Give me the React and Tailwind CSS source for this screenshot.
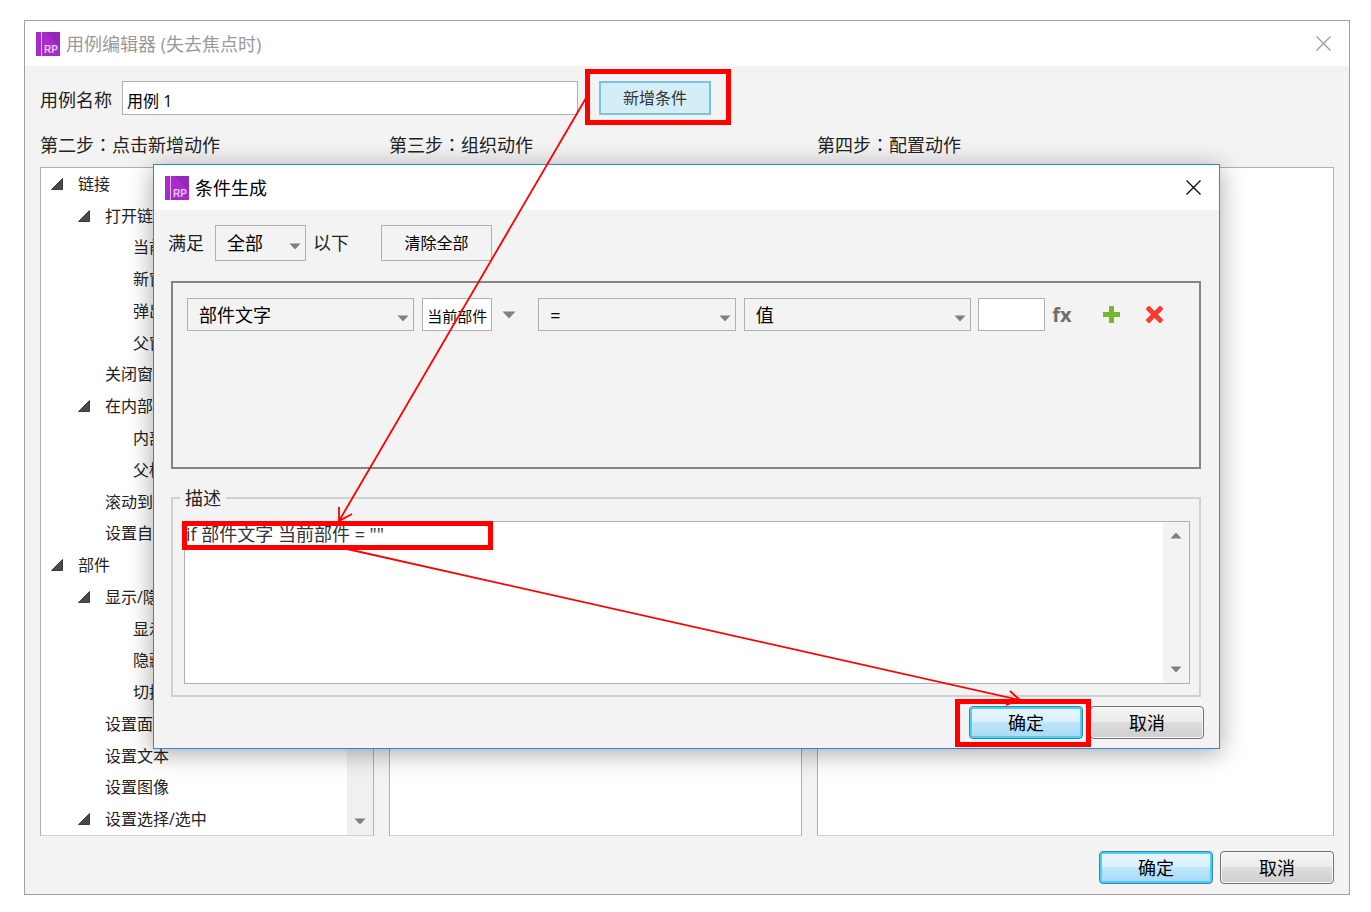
import React, { useState } from 'react';
import clsx from 'clsx';

const ACTIONS = [
  { label: '链接', level: 0, open: true },
  { label: '打开链接', level: 1, open: true },
  { label: '当前窗口', level: 2 },
  { label: '新窗口', level: 2 },
  { label: '弹出窗口', level: 2 },
  { label: '父窗口', level: 2 },
  { label: '关闭窗口', level: 1 },
  { label: '在内部框架中打开', level: 1, open: true },
  { label: '内部框架', level: 2 },
  { label: '父框架', level: 2 },
  { label: '滚动到部件', level: 1 },
  { label: '设置自适应视图', level: 1 },
  { label: '部件', level: 0, open: true },
  { label: '显示/隐藏', level: 1, open: true },
  { label: '显示', level: 2 },
  { label: '隐藏', level: 2 },
  { label: '切换可见性', level: 2 },
  { label: '设置面板状态', level: 1 },
  { label: '设置文本', level: 1 },
  { label: '设置图像', level: 1 },
  { label: '设置选择/选中', level: 1, open: true },
];

const INDENT = ['pl-2.5', 'pl-[37px]', 'pl-[65px]'];

const AppIcon = () => (
  <svg width="24" height="24" viewBox="0 0 24 24" aria-hidden="true" className="shrink-0">
    <rect width="24" height="24" fill="#a72bcb" />
    <path d="M10 0H24V16Z" fill="#9526b8" />
    <rect x="5" width="1" height="24" fill="#e3b4f0" />
    <text x="8" y="21" fontSize="10" fontWeight="bold" fontFamily="Liberation Sans, sans-serif" fill="#e9c6f3">RP</text>
  </svg>
);

const CloseButton = ({ className }) => (
  <button type="button" aria-label="关闭" className={className}>
    <svg width="15" height="15" viewBox="0 0 15 15" fill="none" stroke="currentColor" strokeWidth="1.2">
      <path d="M0.5 0.5L14.5 14.5M14.5 0.5L0.5 14.5" />
    </svg>
  </button>
);

const TitleBar = ({ title, inactive }) => (
  <header className="flex h-[45px] items-center gap-1.5 bg-white pl-[11px] pr-[18px]">
    <AppIcon />
    <h1 className={clsx('flex-1 text-[18px] leading-6', inactive ? 'text-[#999]' : 'text-black')}>{title}</h1>
    <CloseButton className={inactive ? 'text-[#999]' : 'text-black'} />
  </header>
);

const Arrow = ({ up, className }) => (
  <svg width="12" height="7" viewBox="0 0 12 7" aria-hidden="true" className={clsx('pointer-events-none', className)}>
    <path d={up ? 'M0.5 6.5L6 0.5L11.5 6.5Z' : 'M0.5 0.5L6 6.5L11.5 0.5Z'} fill="#808080" />
  </svg>
);

const Select = ({ label, options, className }) => (
  <div className={clsx('relative', className)}>
    <select
      aria-label={label}
      className="h-full w-full appearance-none border border-[#b0b0b0] bg-[#f3f3f3] pl-[11px] text-[18px] leading-6 text-black"
    >
      {options.map((o) => <option key={o}>{o}</option>)}
    </select>
    <Arrow className="absolute right-[5px] top-1/2" />
  </div>
);

// Vista style push buttons, the default one glows blue
const PushButton = ({ primary, children }) => (
  <button
    type="button"
    className={clsx(
      'h-[33px] w-[114px] rounded border text-[18px] leading-6 text-black',
      primary
        ? 'border-[#3c7fb1] bg-[linear-gradient(#eaf6fd,#d9f0fc_50%,#bee6fd_50%,#a7d9f5)] shadow-[inset_0_0_0_2px_#48d1f5]'
        : 'border-[#707070] bg-[linear-gradient(#f4f4f4,#ebebeb_50%,#dddddd_50%,#cfcfcf)] shadow-[inset_0_0_0_1px_#fafafa]'
    )}
  >
    {children}
  </button>
);

const Step = ({ step, name, children }) => (
  <section className="flex min-w-0 flex-col">
    <h2 className="h-9 text-[18px] leading-[27px] text-[#222]">
      {step}<span className="font-['Noto_Sans_CJK_TC',sans-serif]">{'\uFF1A'}</span>{name}
    </h2>
    <div className="flex flex-1 border border-[#b0b0b0] border-b-[#d0d0d0] bg-white">{children}</div>
  </section>
);

const ActionTree = () => (
  <>
    <ul className="flex flex-1 flex-col overflow-hidden">
      {ACTIONS.map(({ label, level, open }, i) => (
        <li key={i} className={clsx('flex flex-1 items-center gap-[15px] whitespace-nowrap text-[16px] leading-6 text-[#222]', INDENT[level])}>
          <svg width="12" height="12" viewBox="0 0 12 12" aria-hidden="true" className="shrink-0">
            {open && <path d="M11.5 0.5V11.5H0.5Z" fill="#4a4a4a" stroke="#222" strokeWidth="0.8" />}
          </svg>
          {label}
        </li>
      ))}
    </ul>
    <div className="flex w-[26px] flex-col items-center justify-end bg-[#f0f0f0] pb-2.5">
      <Arrow />
    </div>
  </>
);

const ConditionDialog = () => {
  const [text, setText] = useState('if 部件文字 当前部件 = ""');

  return (
    <div
      role="dialog"
      aria-label="条件生成"
      className="absolute left-[128px] right-[129px] top-[143px] border border-[#2f86d6] bg-[#f3f3f3] shadow-[0_4px_24px_rgba(0,0,0,0.35)]"
    >
      <TitleBar title="条件生成" />
      <div className="pb-[9px] pl-[17px] pr-[18px] pt-[15px]">
        <div className="-ml-[3px] flex h-9 items-center text-[18px] leading-6 text-[#222]">
          <span>满足</span>
          <Select label="满足" options={['全部', '任何']} className="ml-[11px] h-9 w-[91px]" />
          <span className="ml-[7px]">以下</span>
          <button type="button" className="ml-8 h-9 w-[111px] border border-[#b0b0b0] text-[16px] text-black">清除全部</button>
        </div>

        <div className="mt-5 h-[188px] border-2 border-[#858585] pl-3.5 pr-9 pt-[15px]">
          <div className="flex h-[33px] items-stretch">
            <Select label="条件类型" options={['部件文字']} className="flex-[228]" />
            <input
              aria-label="部件"
              defaultValue="当前部件"
              className="ml-2 w-[70px] border border-[#b0b0b0] bg-white pl-1 pt-1 text-[15px] text-black"
            />
            <button type="button" aria-label="选择部件" className="ml-2.5 mr-[22px]">
              <svg width="14" height="8" viewBox="0 0 14 8" aria-hidden="true">
                <path d="M0.5 0.5L7 7.5L13.5 0.5Z" fill="#808080" />
              </svg>
            </button>
            <Select label="比较" options={['=']} className="flex-[198]" />
            <Select label="值类型" options={['值']} className="ml-2 flex-[228]" />
            <input aria-label="值" className="ml-[7px] w-[67px] border border-[#b0b0b0] bg-white" />
            <button type="button" className="ml-1.5 w-[22px] font-['Open_Sans',sans-serif] text-[20px] font-bold leading-6 text-[#6e6e6e]">fx</button>
            <button type="button" aria-label="新增" className="ml-[30px]">
              <svg width="17" height="17" viewBox="0 0 17 17">
                <path d="M8.5 0V17M0 8.5H17" stroke="#77b82a" strokeWidth="5" />
              </svg>
            </button>
            <button type="button" aria-label="删除" className="ml-[26px]">
              <svg width="17" height="17" viewBox="0 0 17 17">
                <path d="M3 3L14 14M14 3L3 14" stroke="#fb3b30" strokeWidth="5" strokeLinecap="square" />
              </svg>
            </button>
          </div>
        </div>

        <fieldset className="mt-[17px] border-2 border-[#d0d0d0] pb-[11px] pl-[11px] pr-[9px] pt-[11px]">
          <legend className="-ml-1 px-[5px] text-[18px] leading-6 text-[#222]">描述</legend>
          <div className="relative flex h-[163px] border border-[#b0b0b0] bg-white">
            <textarea
              aria-label="描述"
              value={text}
              onChange={(e) => setText(e.target.value)}
              className="min-w-0 flex-1 resize-none overflow-hidden pl-px text-[18px] leading-6 text-[#333]"
            />
            <div className="flex w-[26px] flex-col items-center justify-between bg-[#f3f3f3] py-2.5">
              <Arrow up />
              <Arrow />
            </div>
            <div className="pointer-events-none absolute -left-[3px] -top-px h-[29px] w-[311px] border-[5px] border-[#f00]" />
          </div>
        </fieldset>

        <div className="-mr-[3px] mt-[9px] flex justify-end gap-[7px]">
          <div className="relative z-10 flex">
            <PushButton primary>确定</PushButton>
            <div className="pointer-events-none absolute -bottom-2 -left-3.5 -right-2 -top-[7px] border-[5px] border-[#f00]" />
          </div>
          <PushButton>取消</PushButton>
        </div>
      </div>
    </div>
  );
};

const App = () => (
  <div className="relative flex min-h-screen flex-col bg-white pb-[17px] pl-6 pr-[21px] pt-5 font-['Open_Sans','Noto_Sans_CJK_SC',sans-serif]">
    <main className="relative flex flex-1 flex-col border border-[#a0a0a0] bg-[#f3f3f3]">
      <TitleBar title="用例编辑器 (失去焦点时)" inactive />

      <div className="flex flex-1 flex-col px-[15px] pb-2.5 pt-[15px]">
        <div className="flex h-[34px] items-center">
          <label htmlFor="case-name" className="pt-1 text-[18px] leading-6 text-[#222]">用例名称</label>
          <input
            id="case-name"
            defaultValue="用例 1"
            className="ml-2.5 h-[34px] w-[456px] border border-[#b0b0b0] bg-white pl-1 pt-1 text-[16px] text-black"
          />
          <div className="relative z-10 ml-[21px] flex">
            <button type="button" className="h-[34px] w-[112px] border-2 border-[#74c4ea] bg-[#d4eef8] text-[16px] text-[#333]">新增条件</button>
            <div className="pointer-events-none absolute -bottom-2.5 -left-3.5 -right-5 -top-3 border-[5px] border-[#f00]" />
          </div>
        </div>

        <div className="mt-4 grid flex-1 grid-cols-[334fr_413fr_517fr] gap-[15px]">
          <Step step="第二步" name="点击新增动作"><ActionTree /></Step>
          <Step step="第三步" name="组织动作" />
          <Step step="第四步" name="配置动作" />
        </div>

        <div className="mt-[15px] flex justify-end gap-[7px]">
          <PushButton primary>确定</PushButton>
          <PushButton>取消</PushButton>
        </div>
      </div>

      <ConditionDialog />
    </main>

    {/* walkthrough arrows between the highlighted controls */}
    <svg className="pointer-events-none absolute inset-0 z-20 h-full w-full" fill="none" stroke="#f00" strokeWidth="1.8" aria-hidden="true">
      <path d="M586 98L339 521M339 507V521L352 514" />
      <path d="M347 549L1020 700M1010 691L1020 700L1006 705" />
    </svg>
  </div>
);

export default App;
